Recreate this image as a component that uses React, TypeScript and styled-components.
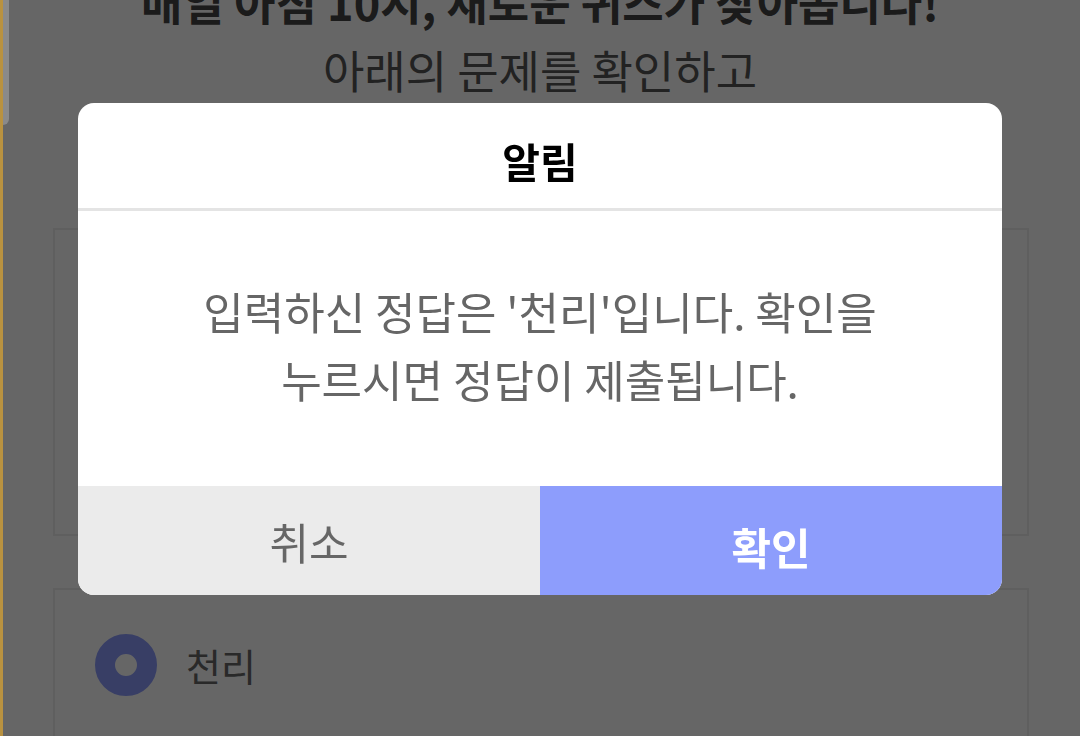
import React, { useState } from 'react';
import styled, { createGlobalStyle } from 'styled-components';

const GlobalStyle = createGlobalStyle`
  html, body {
    margin: 0;
    padding: 0;
    background: #ffffff;
    font-family: "Noto Sans CJK KR", "Noto Sans", sans-serif;
  }
  * {
    box-sizing: border-box;
  }
`;

const Page = styled.div`
  position: relative;
  width: 1080px;
  height: 736px;
  overflow: hidden;
  background: #ffffff;
`;

const Intro = styled.div`
  margin-top: -32px;
  text-align: center;
`;

const IntroLine = styled.div<{ $bold?: boolean }>`
  font-size: 45px;
  line-height: 68px;
  font-weight: ${(p) => (p.$bold ? 700 : 400)};
  color: ${(p) => (p.$bold ? '#444' : '#555')};
`;

const Options = styled.div`
  display: flex;
  flex-direction: column;
  gap: 52px;
  padding: 0 51px 0 53px;
  margin-top: 124px;
`;

const OptionBox = styled.div<{ $height: number }>`
  height: ${(p) => p.$height}px;
  border: 2px solid #eeeeee;
  display: flex;
  align-items: flex-start;
  padding: 44px 0 0 40px;
  gap: 29px;
`;

const Radio = styled.span<{ $checked?: boolean }>`
  width: 62px;
  height: 62px;
  border-radius: 50%;
  border: ${(p) => (p.$checked ? '20px solid #8c9cfc' : '3px solid #bbb')};
  background: #fff;
  flex-shrink: 0;
`;

const OptionLabel = styled.span`
  font-size: 38px;
  line-height: 62px;
  color: #666;
`;

const Scrollbar = styled.div`
  position: absolute;
  left: 0;
  top: 0;
  bottom: 0;
  width: 10px;
  border-left: 3px solid #b99240;
  z-index: 20;
`;

const Thumb = styled.div`
  width: 6px;
  height: 125px;
  background: #8a8a8a;
  border-radius: 0 0 6px 0;
`;

const Overlay = styled.div`
  position: fixed;
  inset: 0;
  background: rgba(0, 0, 0, 0.6);
  display: flex;
  flex-direction: column;
  align-items: center;
  padding-top: 103px;
  z-index: 10;
`;

const Dialog = styled.div`
  width: 924px;
  background: #ffffff;
  border-radius: 16px;
  overflow: hidden;
  display: flex;
  flex-direction: column;
`;

const DialogHeader = styled.div`
  height: 108px;
  display: flex;
  align-items: center;
  justify-content: center;
  border-bottom: 3px solid #e4e4e4;
  font-size: 41px;
  font-weight: 700;
  color: #000;
  padding-top: 8px;
`;

const DialogBody = styled.div`
  height: 275px;
  display: flex;
  align-items: center;
  justify-content: center;
  text-align: center;
  font-size: 44px;
  line-height: 68px;
  color: #666;
  padding-bottom: 8px;
`;

const Actions = styled.div`
  display: grid;
  grid-template-columns: 1fr 1fr;
  height: 109px;
`;

const ActionButton = styled.button<{ $primary?: boolean }>`
  border: none;
  margin: 0;
  padding: ${(p) => (p.$primary ? '10px 0 0' : '0')};
  font-family: inherit;
  font-size: 43px;
  font-weight: ${(p) => (p.$primary ? 700 : 400)};
  color: ${(p) => (p.$primary ? '#ffffff' : '#666')};
  background: ${(p) => (p.$primary ? '#8d9dfc' : '#ebebeb')};
  cursor: pointer;
`;

const App: React.FC = () => {
  const [open, setOpen] = useState<boolean>(true);
  const answer = '천리';

  return (
    <>
      <GlobalStyle />
      <Page>
        <Intro>
          <IntroLine $bold>매일 아침 10시, 새로운 퀴즈가 찾아옵니다!</IntroLine>
          <IntroLine>아래의 문제를 확인하고</IntroLine>
        </Intro>

        <Options>
          <OptionBox $height={308} />
          <OptionBox $height={200}>
            <Radio $checked />
            <OptionLabel>{answer}</OptionLabel>
          </OptionBox>
        </Options>

        {open && (
          <Overlay>
            <Dialog>
              <DialogHeader>알림</DialogHeader>
              <DialogBody>
                입력하신 정답은 '{answer}'입니다. 확인을
                <br />
                누르시면 정답이 제출됩니다.
              </DialogBody>
              <Actions>
                <ActionButton onClick={() => setOpen(false)}>취소</ActionButton>
                <ActionButton $primary onClick={() => setOpen(false)}>
                  확인
                </ActionButton>
              </Actions>
            </Dialog>
          </Overlay>
        )}

        <Scrollbar>
          <Thumb />
        </Scrollbar>
      </Page>
    </>
  );
};

export default App;
